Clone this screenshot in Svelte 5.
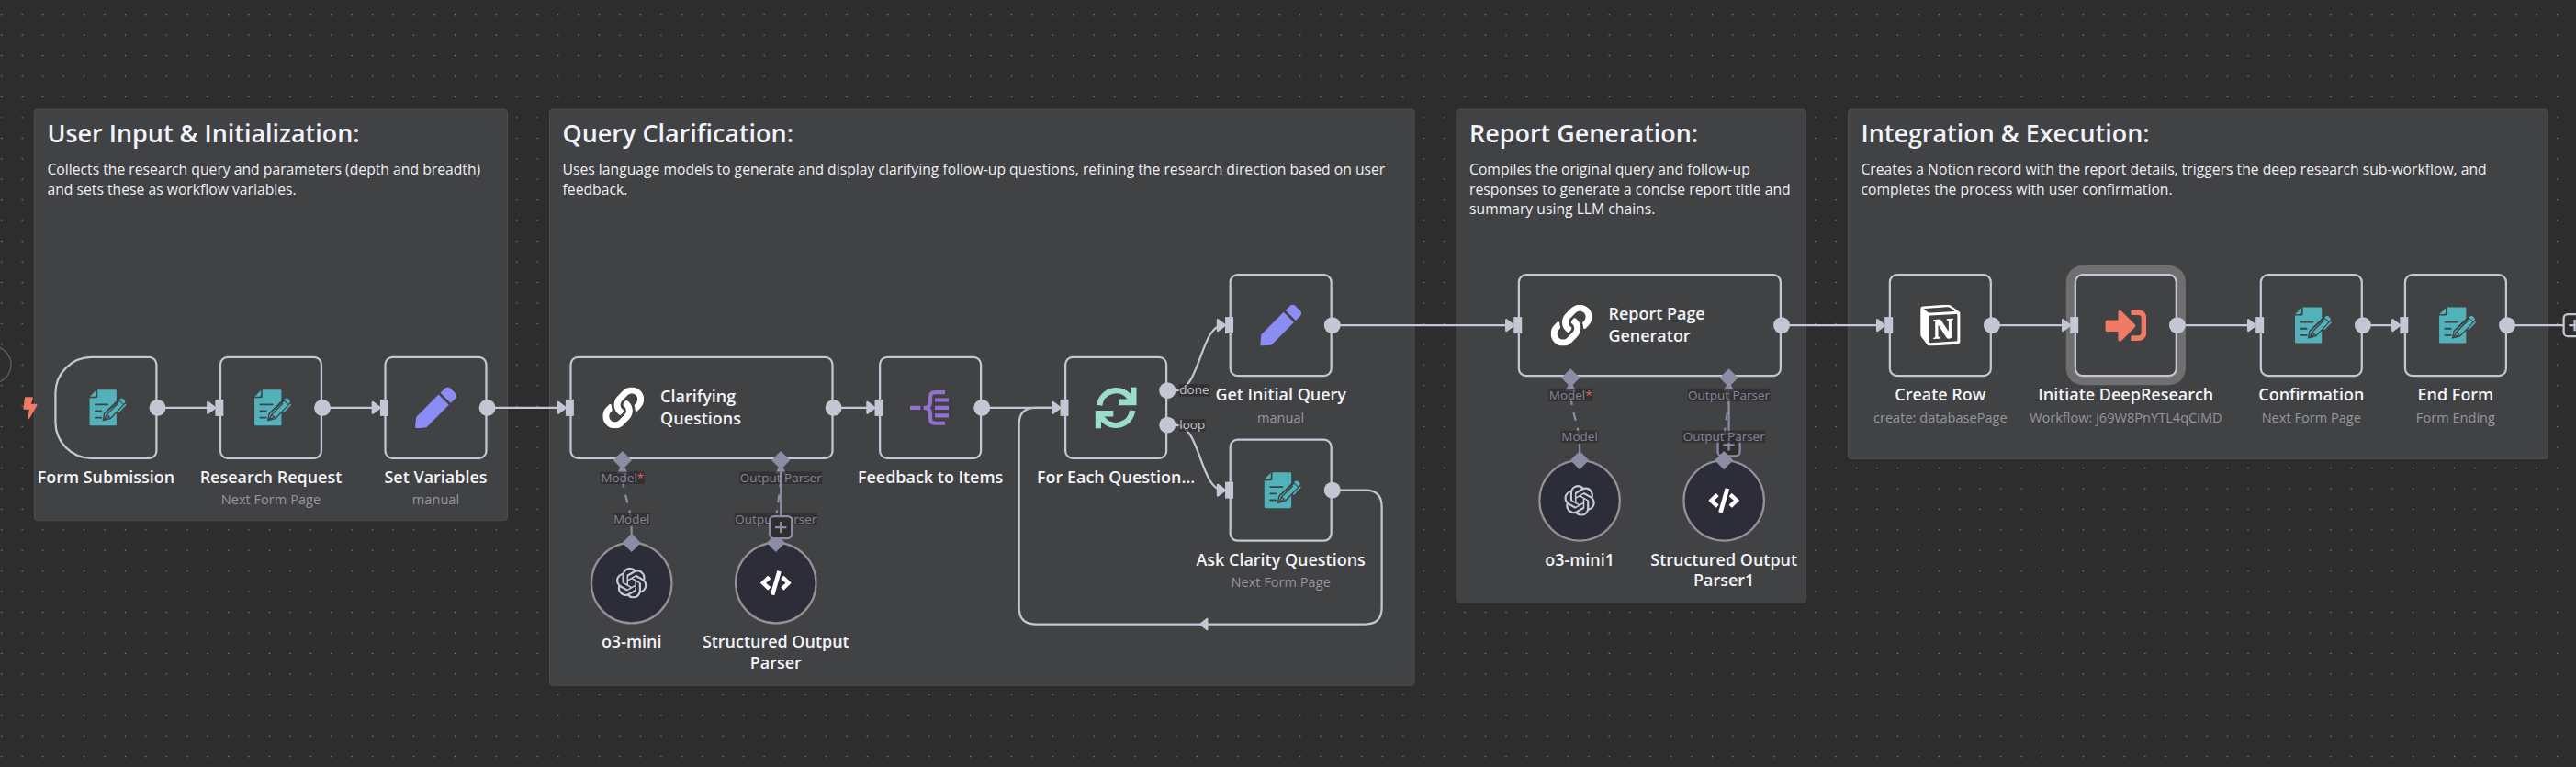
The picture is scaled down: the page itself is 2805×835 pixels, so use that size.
<script>
  const stickies = [
    { x: -20, w: 460, h: 400, title: 'User Input & Initialization:', text: 'Collects the research query and parameters (depth and breadth) and sets these as workflow variables.' },
    { x: 480, w: 840, h: 560, title: 'Query Clarification:', text: 'Uses language models to generate and display clarifying follow-up questions, refining the research direction based on user feedback.' },
    { x: 1360, w: 340, h: 480, title: 'Report Generation:', text: 'Compiles the original query and follow-up responses to generate a concise report title and summary using LLM chains.' },
    { x: 1740, w: 680, h: 340, title: 'Integration & Execution:', text: 'Creates a Notion record with the report details, triggers the deep research sub-workflow, and completes the process with user confirmation.' }
  ];

  const nodes = [
    { x: 0, y: 80, icon: 'form', label: 'Form Submission', trigger: true },
    { x: 160, y: 80, icon: 'form', label: 'Research Request', sub: 'Next Form Page' },
    { x: 320, y: 80, icon: 'pen', label: 'Set Variables', sub: 'manual' },
    { x: 500, y: 80, icon: 'link', label: 'Clarifying Questions', wide: true },
    { x: 800, y: 80, icon: 'split', label: 'Feedback to Items' },
    { x: 980, y: 80, icon: 'sync', label: 'For Each Question...', outs: [33.3, 66.7] },
    { x: 1140, y: 0, icon: 'pen', label: 'Get Initial Query', sub: 'manual' },
    { x: 1140, y: 160, icon: 'form', label: 'Ask Clarity Questions', sub: 'Next Form Page' },
    { x: 1420, y: 0, icon: 'link', label: 'Report Page Generator', wide: true },
    { x: 1780, y: 0, icon: 'notion', label: 'Create Row', sub: 'create: databasePage' },
    { x: 1960, y: 0, icon: 'enter', label: 'Initiate DeepResearch', sub: 'Workflow: j69W8PnYTL4qCiMD', selected: true },
    { x: 2140, y: 0, icon: 'form', label: 'Confirmation', sub: 'Next Form Page' },
    { x: 2280, y: 0, icon: 'form', label: 'End Form', sub: 'Form Ending' }
  ];

  const models = [
    { x: 520, y: 260, icon: 'openai', label: 'o3-mini' },
    { x: 660, y: 260, icon: 'code', label: 'Structured Output Parser' },
    { x: 1440, y: 180, icon: 'openai', label: 'o3-mini1' },
    { x: 1580, y: 180, icon: 'code', label: 'Structured Output Parser1' }
  ];

  const straight = [
    [100, 160, 130], [260, 320, 130], [420, 500, 130], [756, 800, 130], [900, 980, 130],
    [1240, 1420, 50], [1676, 1780, 50], [1880, 1960, 50], [2060, 2140, 50], [2240, 2280, 50]
  ];

  const groups = [
    { x: 500, y: 180, front: true },
    { x: 1420, y: 100, front: false }
  ];

  const portLabels = [
    { x: 551.2, y: 198, text: 'Model', required: true },
    { x: 560, y: 238, text: 'Model' },
    { x: 704.8, y: 198, text: 'Output Parser' },
    { x: 700, y: 238, text: 'Output Parser' },
    { x: 1471.2, y: 118, text: 'Model', required: true },
    { x: 1480, y: 158, text: 'Model' },
    { x: 1624.8, y: 118, text: 'Output Parser' },
    { x: 1620, y: 158, text: 'Output Parser' }
  ];
</script>

{#snippet icon(name)}
  {#if name === 'form'}
    <svg class="icon" viewBox="847.2 693.2 134.7 134.7" fill="#52b2bb">
      <path d="M887 702H945Q949 702 949 706V738L909 777L904 800L930 794L949 776V815Q949 819 945 819H865Q861 819 861 815V729H883Q887 729 887 725Z" />
      <path d="M882 704V719Q882 724 877 724H862Z" />
      <path d="M880 750H920M880 771.500H899M880 793H899" stroke="#414244" stroke-width="5.500" stroke-linecap="round" />
      <path d="M960 736L974 749L929 796L905 802L909 780Z" stroke="#414244" stroke-width="4" />
      <path d="M917 780L954 744L966 755L929 790Z" />
      <path d="M917 783L926 791L909 799ZM917 783L954 746" fill="none" stroke="#414244" stroke-width="4" />
      <path d="M960 733Q965 727 970 731L976 736Q980 740 975 745L972 748L957 735Z" />
      <path d="M978 751L957 773" fill="none" stroke="#52b2bb" stroke-width="5" stroke-linecap="round" />
      <path d="M958 738L972 751" fill="none" stroke="#414244" stroke-width="3" />
    </svg>
  {:else if name === 'pen'}
    <svg class="icon" viewBox="0 0 512 512" fill="#8b8df5"><path d="M290.740 93.240l128.020 128.020-277.990 277.990-114.140 12.600C11.350 513.540-1.560 500.620.140 485.340l12.700-114.220 277.900-277.880zm207.200-19.060l-60.110-60.110c-18.750-18.750-49.160-18.750-67.910 0l-56.550 56.550 128.020 128.020 56.550-56.550c18.750-18.760 18.750-49.160 0-67.910z" /></svg>
  {:else if name === 'link'}
    <svg class="icon" viewBox="0 0 512 512" fill="#fff"><path d="M326.612 185.391c59.747 59.809 58.927 155.698.36 214.590-.11.12-.24.25-.36.37l-67.200 67.200c-59.270 59.270-155.699 59.262-214.960 0-59.270-59.260-59.270-155.700 0-214.960l37.106-37.106c9.840-9.840 26.786-3.300 27.294 10.606.648 17.722 3.826 35.527 9.690 52.721 1.986 5.822.567 12.262-3.783 16.612l-13.087 13.087c-28.026 28.026-28.905 73.660-1.155 101.960 28.024 28.579 74.086 28.749 102.325.51l67.200-67.190c28.191-28.191 28.073-73.757 0-101.830-3.701-3.694-7.429-6.564-10.341-8.569a16.037 16.037 0 0 1-6.947-12.606c-.396-10.567 3.348-21.456 11.698-29.806l21.054-21.055c5.521-5.521 14.182-6.199 20.584-1.731a152.482 152.482 0 0 1 20.522 17.197zM467.547 44.449c-59.261-59.262-155.690-59.270-214.960 0l-67.200 67.200c-.12.12-.25.25-.36.37-58.566 58.892-59.387 154.781.36 214.590a152.454 152.454 0 0 0 20.521 17.196c6.402 4.468 15.064 3.789 20.584-1.731l21.054-21.055c8.350-8.350 12.094-19.239 11.698-29.806a16.037 16.037 0 0 0-6.947-12.606c-2.912-2.005-6.640-4.875-10.341-8.569-28.073-28.073-28.191-73.639 0-101.830l67.200-67.190c28.239-28.239 74.300-28.069 102.325.51 27.750 28.300 26.872 73.934-1.155 101.960l-13.087 13.087c-4.350 4.350-5.769 10.790-3.783 16.612 5.864 17.194 9.042 34.999 9.690 52.721.509 13.906 17.454 20.446 27.294 10.606l37.106-37.106c59.271-59.259 59.271-155.699.001-214.959z" /></svg>
  {:else if name === 'split'}
    <svg class="icon" viewBox="152 153.6 134.7 134.7" fill="none" stroke="#966fd2" stroke-width="12.500">
      <path d="M153 221H187M267 170.500H236Q219 170.500 219 186V203Q219 221 197 221Q219 221 219 239V256Q219 271.500 236 271.500H267M234 195.700H279M234 221H279M234 246.200H279" />
    </svg>
  {:else if name === 'sync'}
    <svg class="icon" viewBox="758 153.6 134.7 134.7">
      <g fill="none" stroke="#9bdccb" stroke-width="19">
        <path d="M771.500 213A55 56 0 0 1 869 186L884 204" />
        <path d="M879.500 230A55 56 0 0 1 782 257L767 239" />
      </g>
      <path fill="#9bdccb" d="M874 153H894V213H834V193H874ZM777 290H757V230H817V250H777Z" />
    </svg>
  {:else if name === 'enter'}
    <svg class="icon" viewBox="0 0 512 512" fill="#ef7a65"><path d="M416 448h-84c-6.600 0-12-5.400-12-12v-40c0-6.600 5.400-12 12-12h84c17.700 0 32-14.300 32-32V160c0-17.700-14.300-32-32-32h-84c-6.600 0-12-5.400-12-12V76c0-6.600 5.400-12 12-12h84c53 0 96 43 96 96v192c0 53-43 96-96 96zm-47-201L201 79c-15-15-41-4.500-41 17v96H24c-13.300 0-24 10.700-24 24v96c0 13.300 10.700 24 24 24h136v96c0 21.500 26 32 41 17l168-168c9.300-9.400 9.300-24.600 0-34z" /></svg>
  {:else if name === 'notion'}
    <svg class="icon" viewBox="0.6 0 22.8 24" fill="#fff"><path d="M4.459 4.208c.746.606 1.026.56 2.428.466l13.215-.793c.28 0 .047-.28-.046-.326L17.860 1.968c-.42-.326-.981-.7-2.055-.607L3.010 2.295c-.466.046-.56.28-.374.466zm.793 3.080v13.904c0 .747.373 1.027 1.214.98l14.523-.84c.841-.046.935-.56.935-1.167V6.354c0-.606-.233-.933-.748-.887l-15.177.887c-.56.047-.747.327-.747.933zm14.337.745c.093.42 0 .84-.42.888l-.7.14v10.264c-.608.327-1.168.514-1.635.514-.748 0-.935-.234-1.495-.933l-4.577-7.186v6.952L12.210 19s0 .84-1.168.84l-3.222.186c-.093-.186 0-.653.327-.746l.84-.233V9.854L7.822 9.760c-.094-.42.14-1.026.793-1.073l3.456-.233 4.764 7.279v-6.440l-1.215-.139c-.093-.514.28-.887.747-.933zM1.936 1.035l13.310-.98c1.634-.14 2.055-.047 3.082.7l4.249 2.986c.7.513.934.653.934 1.213v16.378c0 1.026-.373 1.634-1.680 1.726l-15.458.934c-.98.047-1.448-.093-1.962-.747l-3.129-4.060c-.56-.747-.793-1.306-.793-1.960V2.667c0-.839.374-1.540 1.447-1.632z" /></svg>
  {:else if name === 'openai'}
    <svg class="icon small" viewBox="0 0 24 24" fill="#c4cbd6"><path d="M22.2819 9.8211a5.9847 5.9847 0 0 0-.5157-4.9108 6.0462 6.0462 0 0 0-6.5098-2.9A6.0651 6.0651 0 0 0 4.9807 4.1818a5.9847 5.9847 0 0 0-3.9977 2.9 6.0462 6.0462 0 0 0 .7427 7.0966 5.98 5.98 0 0 0 .511 4.9107 6.051 6.051 0 0 0 6.5146 2.9001A5.9847 5.9847 0 0 0 13.2599 24a6.0557 6.0557 0 0 0 5.7718-4.2058 5.9894 5.9894 0 0 0 3.9977-2.9001 6.0557 6.0557 0 0 0-.7475-7.0729zm-9.022 12.6081a4.4755 4.4755 0 0 1-2.8764-1.0408l.1419-.0804 4.7783-2.7582a.7948.7948 0 0 0 .3927-.6813v-6.7369l2.02 1.1686a.071.071 0 0 1 .038.052v5.5826a4.504 4.504 0 0 1-4.4945 4.4944zm-9.6607-4.1254a4.4708 4.4708 0 0 1-.5346-3.0137l.142.0852 4.783 2.7582a.7712.7712 0 0 0 .7806 0l5.8428-3.3685v2.3324a.0804.0804 0 0 1-.0332.0615L9.74 19.9502a4.4992 4.4992 0 0 1-6.1408-1.6464zM2.3408 7.8956a4.485 4.485 0 0 1 2.3655-1.9728V11.6a.7664.7664 0 0 0 .3879.6765l5.8144 3.3543-2.0201 1.1685a.0757.0757 0 0 1-.071 0l-4.8303-2.7865A4.504 4.504 0 0 1 2.3408 7.872zm16.5963 3.8558L13.1038 8.364 15.1192 7.2a.0757.0757 0 0 1 .071 0l4.8303 2.7913a4.4944 4.4944 0 0 1-.6765 8.1042v-5.6772a.79.79 0 0 0-.407-.667zm2.0107-3.0231l-.142-.0852-4.7735-2.7818a.7759.7759 0 0 0-.7854 0L9.409 9.2297V6.8974a.0662.0662 0 0 1 .0284-.0615l4.8303-2.7866a4.4992 4.4992 0 0 1 6.6802 4.66zM8.3065 12.863l-2.02-1.1638a.0804.0804 0 0 1-.038-.0567V6.0742a4.4992 4.4992 0 0 1 7.3757-3.4537l-.142.0805L8.704 5.459a.7948.7948 0 0 0-.3927.6813zm1.0976-2.3654l2.602-1.4998 2.6069 1.4998v2.9994l-2.5974 1.4997-2.6067-1.4997Z" /></svg>
  {:else if name === 'code'}
    <svg class="icon small" viewBox="0 0 640 512" fill="#fff"><path d="M278.900 511.500l-61-17.700c-6.400-1.800-10-8.500-8.200-14.900L346.200 8.700c1.800-6.400 8.500-10 14.900-8.200l61 17.700c6.400 1.800 10 8.500 8.200 14.900L293.800 503.300c-1.900 6.400-8.500 10.100-14.900 8.200zm-114-112.200l43.500-46.400c4.600-4.900 4.300-12.700-.8-17.200L117 256l90.600-79.700c5.100-4.500 5.500-12.300.8-17.200l-43.500-46.400c-4.500-4.800-12.100-5.100-17-.5L3.800 247.200c-5.100 4.700-5.100 12.800 0 17.500l144.100 135.100c4.900 4.600 12.500 4.400 17-.5zm327.200.6l144.100-135.100c5.100-4.700 5.100-12.800 0-17.500L492.100 112.100c-4.800-4.500-12.400-4.300-17 .5L431.600 159c-4.600 4.900-4.300 12.700.8 17.200L523 256l-90.600 79.700c-5.100 4.500-5.500 12.300-.8 17.200l43.500 46.400c4.500 4.900 12.100 5.100 17 .6z" /></svg>
  {/if}
{/snippet}

{#snippet plus(x, y, color)}
  <g stroke={color} stroke-width="2" fill="none">
    <rect x={x - 10.700} y={y - 10.700} width="21.400" height="21.400" rx="4" fill="#2e2e2f" />
    <path d="M{x - 5.500} {y}H{x + 5.500}M{x} {y - 5.500}V{y + 5.500}" />
  </g>
{/snippet}

{#snippet parserPlus(g)}
  <path d="M{g.x + 204.800} {g.y + 6}V{g.y + 56}" stroke="#8c8da5" stroke-width="2" />
  {@render plus(g.x + 204.8, g.y + 66, '#8c8da5')}
{/snippet}

<main>
  <svg class="grid" width="2805" height="835">
    <defs>
      <pattern id="dots" x="-9.480" y="4.500" width="22.443" height="22.443" patternUnits="userSpaceOnUse">
        <circle cx="11.220" cy="11.220" r="0.750" fill="#8a8a8a" />
      </pattern>
    </defs>
    <rect width="2805" height="835" fill="url(#dots)" />
    <circle cx="-8" cy="397" r="20" fill="#2e2e2e" stroke="#58585a" stroke-width="1.500" />
  </svg>

  <div class="canvas">
    {#each stickies as s}
      <section class="sticky" style="left:{s.x}px;width:{s.w}px;height:{s.h}px">
        <h2>{s.title}</h2>
        <p>{s.text}</p>
      </section>
    {/each}

    <svg class="layer" width="10" height="10" fill="none">
      <path fill="#ef7a65" transform="translate(-30.200 119.600) scale(0.0418)" d="M296 160H180.600l42.600-129.800C227.200 15 215.700 0 200 0H56C44 0 33.800 8.900 32.200 20.800l-32 240C-1.700 275.200 9.500 288 24 288h118.700L96.600 482.500c-3.600 15.200 8 29.500 23.300 29.500 8.400 0 16.400-4.400 20.800-12l176-304c9.300-15.900-2.200-36-20.700-36z" />
      <g stroke="#c4c7d3" stroke-width="2">
        {#each straight as [a, b, y]}
          <path d="M{a} {y}H{b - 6}" />
        {/each}
        <path d="M1080 113.300H1088C1112 113.300 1112 50 1134 50" />
        <path d="M1080 146.700H1088C1112 146.700 1112 210 1134 210" />
        <path d="M1240 210H1272Q1288 210 1288 226V324Q1288 340 1272 340H952Q936 340 936 324V146Q936 130 952 130H970" />
        <path d="M2380 50H2435" />
      </g>
      {#each groups as g}
        <g stroke="#8c8da5" stroke-width="2" stroke-dasharray="8 7.500">
          <path d="M{g.x + 60} {g.y + 73}C{g.x + 60} {g.y + 40} {g.x + 51.200} {g.y + 40} {g.x + 51.200} {g.y + 10}" />
          <path d="M{g.x + 200} {g.y + 73}C{g.x + 200} {g.y + 40} {g.x + 204.800} {g.y + 40} {g.x + 204.800} {g.y + 10}" />
        </g>
        {#if !g.front}{@render parserPlus(g)}{/if}
        <path fill="#8c8da5" d="M{g.x + 51.200} {g.y + 4}l5.500 10h-11zM{g.x + 204.800} {g.y + 4}l5.500 10h-11z" />
      {/each}
      {@render plus(2445.6, 50, '#c4c7d3')}
    </svg>

    {#each nodes as n}
      <div class="node" class:wide={n.wide} class:trigger={n.trigger} class:selected={n.selected} style="left:{n.x}px;top:{n.y}px">
        {@render icon(n.icon)}
        {#if n.wide}
          <span class="side">{n.label}</span>
        {:else}
          <div class="caption">
            <div>{n.label}</div>
            {#if n.sub}<small>{n.sub}</small>{/if}
          </div>
        {/if}
      </div>
    {/each}

    {#each models as m}
      <div class="model" style="left:{m.x}px;top:{m.y}px">
        {@render icon(m.icon)}
        <div class="caption narrow">{m.label}</div>
      </div>
    {/each}

    <svg class="layer" width="10" height="10">
      <g fill="#c4c7d3">
        {#each nodes as n}
          {@const w = n.wide ? 256 : 100}
          {#each n.outs ?? [50] as o}
            <circle cx={n.x + w} cy={n.y + o} r="8" />
          {/each}
          {#if !n.trigger}
            <rect x={n.x - 4} y={n.y + 42} width="8" height="16" />
            <path d="M{n.x - 11} {n.y + 45}L{n.x - 4.500} {n.y + 50}L{n.x - 11} {n.y + 55}Z" stroke="#c4c7d3" stroke-width="2.500" stroke-linejoin="round" />
          {/if}
        {/each}
        <path d="M1118.500 335V345L1112 340Z" stroke="#c4c7d3" stroke-width="2" stroke-linejoin="round" />
      </g>
      <g fill="#8c8da5">
        {#each groups as g}
          {#each [[51.2, 1], [204.8, 1], [60, 81], [200, 81]] as [dx, dy]}
            <path d="M{g.x + dx} {g.y + dy - 9}l9 9l-9 9l-9 -9z" />
          {/each}
        {/each}
      </g>
    </svg>

    {#each portLabels as p}
      <span class="port" style="left:{p.x}px;top:{p.y}px">{p.text}{#if p.required}<b>*</b>{/if}</span>
    {/each}
    <span class="port out" style="left:1091.200px;top:113.300px">done</span>
    <span class="port out" style="left:1091.200px;top:146.700px">loop</span>

    <svg class="layer" width="10" height="10" fill="none">
      {#each groups as g}
        {#if g.front}{@render parserPlus({ x: g.x, y: g.y })}{/if}
      {/each}
    </svg>
  </div>
</main>

<style>
  :global(body) { background: #2d2d2d; overflow: hidden; }
  main {
    position: relative;
    width: 2805px;
    height: 835px;
    overflow: hidden;
    background: #2d2d2d;
    font-family: "Open Sans", sans-serif;
  }
  .grid { display: block; }
  .canvas {
    position: absolute;
    left: 0;
    top: 0;
    transform-origin: 0 0;
    transform: translate(59.300px, 298px) scale(1.12215);
  }
  .layer { position: absolute; left: 0; top: 0; overflow: visible; }
  .sticky {
    position: absolute;
    top: -160px;
    box-sizing: border-box;
    padding: 8px 12px;
    border: 1px solid #4c4d4f;
    border-radius: 4px;
    background: #414244;
    color: #eeeef4;
  }
  h2 { margin: 0; font-size: 24px; line-height: 30px; font-weight: 600; white-space: nowrap; color: #f2f2fa; }
  p { margin: 11px 0 0; font-size: 14px; line-height: 18.800px; }
  .node {
    position: absolute;
    box-sizing: border-box;
    width: 100px;
    height: 100px;
    display: flex;
    align-items: center;
    justify-content: center;
    border: 2px solid #c4c7d3;
    border-radius: 8px;
    background: #414244;
    color: #f2f2f7;
  }
  .wide { width: 256px; justify-content: flex-start; padding-left: 30px; gap: 16px; }
  .trigger { border-radius: 36px 8px 8px 36px; }
  .selected { box-shadow: 0 0 0 8px #6f6f70; }
  .icon { width: 40px; height: 40px; flex: none; }
  .icon.small { width: 30px; height: 30px; }
  .side { width: 120px; font-size: 16px; line-height: 20.800px; font-weight: 600; }
  .caption {
    position: absolute;
    top: 104.500px;
    left: 50%;
    transform: translateX(-50%);
    text-align: center;
    white-space: nowrap;
    font-size: 16px;
    line-height: 20.400px;
    font-weight: 600;
    color: #f2f2f7;
  }
  .caption.narrow { top: 85px; width: 160px; white-space: normal; line-height: 20px; }
  small { display: block; margin-top: 3px; font-size: 13px; line-height: 18px; font-weight: 400; color: #96969e; }
  .model {
    position: absolute;
    box-sizing: border-box;
    width: 80px;
    height: 80px;
    display: flex;
    align-items: center;
    justify-content: center;
    border: 2px solid #919196;
    border-radius: 50%;
    background: #2d2c39;
  }
  .port {
    position: absolute;
    transform: translate(-50%, -50%);
    padding: 0 0.500px;
    font-size: 12px;
    line-height: 12px;
    white-space: nowrap;
    color: #84859c;
    background: rgba(45, 45, 45, 0.750);
  }
  .port.out { transform: translateY(-50%); color: #c2c3cc; }
  b { font-weight: 400; color: #e06464; }
</style>
